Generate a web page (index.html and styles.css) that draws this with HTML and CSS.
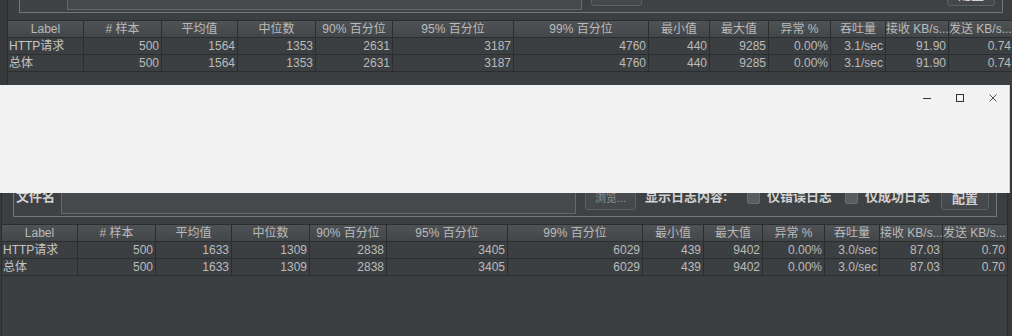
FILE: index.html
```html
<!DOCTYPE html>
<html lang="zh-CN">
<head>
<meta charset="utf-8">
<title>聚合报告</title>
<link rel="stylesheet" href="styles.css">
</head>
<body>
<div class="screen">
  <section class="panel panel-a">
    <div class="group-clip">
      <div class="group">
        <div class="row">
          <span class="lbl-bold lbl-file">文件名</span>
          <span class="field"></span>
          <span class="btn btn-browse">浏览...</span>
          <span class="lbl-bold lbl-show">显示日志内容:</span>
          <span class="check check-1"></span>
          <span class="lbl-bold lbl-opt">仅错误日志</span>
          <span class="check check-2"></span>
          <span class="lbl-bold lbl-opt">仅成功日志</span>
          <span class="btn btn-config">配置</span>
        </div>
      </div>
    </div>
    <div class="tbl">
      <div class="th">Label</div><div class="th"># 样本</div><div class="th">平均值</div><div class="th">中位数</div><div class="th">90% 百分位</div><div class="th">95% 百分位</div><div class="th">99% 百分位</div><div class="th">最小值</div><div class="th">最大值</div><div class="th">异常 %</div><div class="th">吞吐量</div><div class="th th-cut">接收 KB/s...</div><div class="th th-cut">发送 KB/s...</div>
      <div class="td lbl">HTTP请求</div><div class="td">500</div><div class="td">1564</div><div class="td">1353</div><div class="td">2631</div><div class="td">3187</div><div class="td">4760</div><div class="td">440</div><div class="td">9285</div><div class="td">0.00%</div><div class="td">3.1/sec</div><div class="td">91.90</div><div class="td">0.74</div>
      <div class="td lbl">总体</div><div class="td">500</div><div class="td">1564</div><div class="td">1353</div><div class="td">2631</div><div class="td">3187</div><div class="td">4760</div><div class="td">440</div><div class="td">9285</div><div class="td">0.00%</div><div class="td">3.1/sec</div><div class="td">91.90</div><div class="td">0.74</div>
    </div>
  </section>

  <section class="panel panel-b">
    <div class="group-clip">
      <div class="group">
        <div class="row">
          <span class="lbl-bold lbl-file">文件名</span>
          <span class="field"></span>
          <span class="btn btn-browse">浏览...</span>
          <span class="lbl-bold lbl-show">显示日志内容:</span>
          <span class="check check-1"></span>
          <span class="lbl-bold lbl-opt">仅错误日志</span>
          <span class="check check-2"></span>
          <span class="lbl-bold lbl-opt">仅成功日志</span>
          <span class="btn btn-config">配置</span>
        </div>
      </div>
    </div>
    <div class="tbl">
      <div class="th">Label</div><div class="th"># 样本</div><div class="th">平均值</div><div class="th">中位数</div><div class="th">90% 百分位</div><div class="th">95% 百分位</div><div class="th">99% 百分位</div><div class="th">最小值</div><div class="th">最大值</div><div class="th">异常 %</div><div class="th">吞吐量</div><div class="th th-cut">接收 KB/s...</div><div class="th th-cut">发送 KB/s...</div>
      <div class="td lbl">HTTP请求</div><div class="td">500</div><div class="td">1633</div><div class="td">1309</div><div class="td">2838</div><div class="td">3405</div><div class="td">6029</div><div class="td">439</div><div class="td">9402</div><div class="td">0.00%</div><div class="td">3.0/sec</div><div class="td">87.03</div><div class="td">0.70</div>
      <div class="td lbl">总体</div><div class="td">500</div><div class="td">1633</div><div class="td">1309</div><div class="td">2838</div><div class="td">3405</div><div class="td">6029</div><div class="td">439</div><div class="td">9402</div><div class="td">0.00%</div><div class="td">3.0/sec</div><div class="td">87.03</div><div class="td">0.70</div>
    </div>
  </section>

  <div class="dialog">
    <div class="titlebar">
      <span class="wbtn" title="最小化">
        <svg width="10" height="10" viewBox="0 0 10 10"><path d="M1 5.5H9" stroke="#333" stroke-width="1" fill="none"/></svg>
      </span>
      <span class="wbtn" title="最大化">
        <svg width="10" height="10" viewBox="0 0 10 10"><rect x="1.5" y="1.5" width="7" height="7" stroke="#333" stroke-width="1" fill="none"/></svg>
      </span>
      <span class="wbtn" title="关闭">
        <svg width="10" height="10" viewBox="0 0 10 10"><path d="M1.5 1.5L8.5 8.5M8.5 1.5L1.5 8.5" stroke="#555" stroke-width="1" fill="none"/></svg>
      </span>
    </div>
  </div>
</div>
</body>
</html>
```

FILE: styles.css
```css
* {
  box-sizing: border-box;
}

html, body {
  margin: 0;
  padding: 0;
  background: #393b3d;
}

.screen {
  position: relative;
  width: 1012px;
  height: 336px;
  overflow: hidden;
  background: #37393b;
  font-family: "Liberation Sans", "Noto Sans CJK SC", sans-serif;
  color: #bbbbbb;
}

.panel {
  display: flex;
  flex-direction: column;
  overflow: hidden;
  background: #3c3f41;
  border-left: 1px solid #2b2d2f;
}

.panel-a {
  height: 85px;
  margin-left: 7px;
}

.panel-b {
  height: 251px;
  width: 1007px;
  margin-left: 1px;
  border-right: 1px solid #2b2d2f;
}

.group-clip {
  flex: none;
  display: flex;
  flex-direction: column;
  justify-content: flex-end;
  overflow: hidden;
}

.panel-a .group-clip {
  height: 13px;
}

.panel-b .group-clip {
  height: 132px;
}

.group {
  flex: none;
  width: 984px;
  margin-left: 11px;
  padding: 4px 0 2px 0;
  border: 1px solid #737678;
  background: #3f4244;
}

.row {
  display: flex;
  align-items: center;
  height: 34px;
  padding-left: 2px;
}

.row > * {
  flex: none;
}

.lbl-bold {
  font-size: 13px;
  font-weight: bold;
  line-height: 16px;
  color: #d2d2d2;
  white-space: nowrap;
}

.lbl-file {
  width: 39px;
}

.field {
  width: 515px;
  height: 34px;
  margin-left: 6px;
  background: #45494a;
  border: 1px solid #66696b;
}

.btn {
  height: 26px;
  display: flex;
  align-items: center;
  justify-content: center;
  border: 1px solid #5e6163;
  border-radius: 3px;
  background: linear-gradient(#4a4e50, #43474a);
  white-space: nowrap;
}

.btn-browse {
  width: 51px;
  margin-left: 9px;
  font-size: 11px;
  color: #8d8f91;
}

.lbl-show {
  width: 85px;
  margin-left: 9px;
}

.check {
  width: 13px;
  height: 13px;
  background: #5a5d5f;
  border: 1px solid #6a6d6f;
  border-radius: 2px;
}

.check-1 {
  margin-left: 17px;
}

.check-2 {
  margin-left: 14px;
}

.lbl-opt {
  width: 64px;
  margin-left: 7px;
}

.btn-config {
  width: 48px;
  margin-left: 12px;
  font-size: 13px;
  font-weight: bold;
  color: #d2d2d2;
}

.tbl {
  flex: none;
  display: grid;
  grid-template-columns: 75px 77px 75px 77px 76px 120px 134px 60px 58px 61px 54px 62px 64px;
  gap: 1px;
  width: max-content;
  margin-top: 7px;
  background: #2b2d2f;
  border-top: 1px solid #2b2d2f;
  border-bottom: 1px solid #2b2d2f;
}

.th,
.td {
  height: 16px;
  font-size: 12px;
  line-height: 16px;
  white-space: nowrap;
  overflow: hidden;
}

.th {
  text-align: center;
  color: #b9babb;
  background: linear-gradient(#505356, #434649);
}

.th-cut {
  text-align: left;
}

.td {
  text-align: right;
  padding-right: 2px;
  background: #3c3f41;
  color: #bbbbbb;
}

.td.lbl {
  text-align: left;
  padding-left: 1px;
  padding-right: 0;
  color: #c4c4c4;
}

.dialog {
  position: absolute;
  left: 0;
  top: 85px;
  width: 1010px;
  height: 108px;
  background: #f2f2f2;
  border-right: 1px solid #d2d2d2;
}

.titlebar {
  display: flex;
  justify-content: flex-end;
  height: 26px;
}

.wbtn {
  width: 33px;
  height: 26px;
  display: flex;
  align-items: center;
  justify-content: center;
}
```
